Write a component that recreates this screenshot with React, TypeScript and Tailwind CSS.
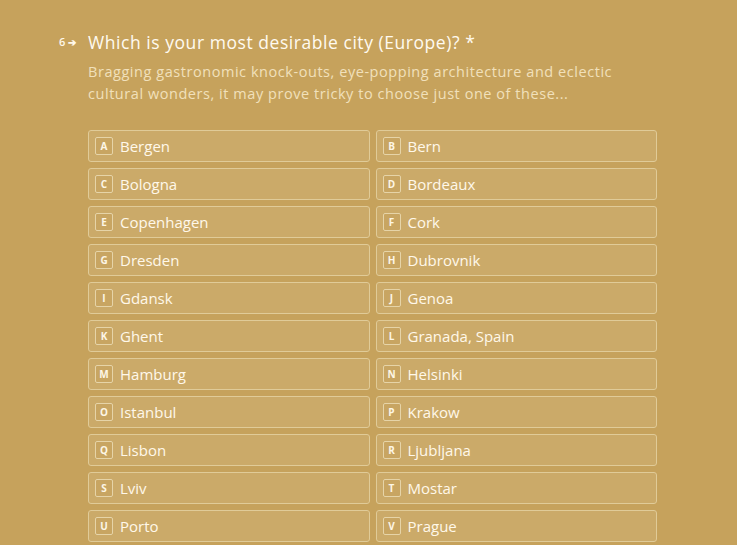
const cities = [
  'Bergen', 'Bern', 'Bologna', 'Bordeaux', 'Copenhagen', 'Cork', 'Dresden', 'Dubrovnik',
  'Gdansk', 'Genoa', 'Ghent', 'Granada, Spain', 'Hamburg', 'Helsinki', 'Istanbul', 'Krakow',
  'Lisbon', 'Ljubljana', 'Lviv', 'Mostar', 'Porto', 'Prague',
]

const letters = 'ABCDEFGHIJKLMNOPQRSTUV'.split('')

function Option({ letter, label }: { letter: string; label: string }) {
  return (
    <div className="flex h-[32px] items-center rounded-[3px] border border-[#e0cb98] bg-[#cbaa69] pl-[6px]">
      <span className="flex h-[18px] w-[18px] items-center justify-center rounded-[2px] border border-[#e6d4a8] bg-[#c8a562] text-[10px] font-bold text-[#fdf6e6]">
        {letter}
      </span>
      <span className="ml-[7px] text-[15px] text-[#fff8ea]">{label}</span>
    </div>
  )
}

export default function App() {
  return (
    <div
      className="min-h-[545px] w-full overflow-hidden bg-[#c6a25c]"
      style={{ fontFamily: '"Open Sans", Lato, sans-serif' }}
    >
      <div className="flex pt-[30px] pl-[59px]">
        <div className="flex h-[24px] w-[29px] items-center gap-[3px] text-[11px] font-semibold text-[#fff8ea]">
          <span>6</span>
          <span className="text-[10px]">➔</span>
        </div>
        <div className="w-[580px]">
          <h1 className="text-[17.5px] leading-[24px] tracking-[0.55px] text-[#fffaf0]">
            Which is your most desirable city (Europe)? *
          </h1>
          <p className="mt-[7px] w-[560px] text-[14.5px] leading-[22px] tracking-[0.55px] text-[#f1e0bb]">
            Bragging gastronomic knock-outs, eye-popping architecture and eclectic
            cultural wonders, it may prove tricky to choose just one of these...
          </p>
          <div className="mt-[25px] grid w-[569px] grid-cols-2 gap-x-[6px] gap-y-[6px]">
            {cities.map((c, i) => (
              <Option key={c} letter={letters[i]} label={c} />
            ))}
          </div>
        </div>
      </div>
    </div>
  )
}
